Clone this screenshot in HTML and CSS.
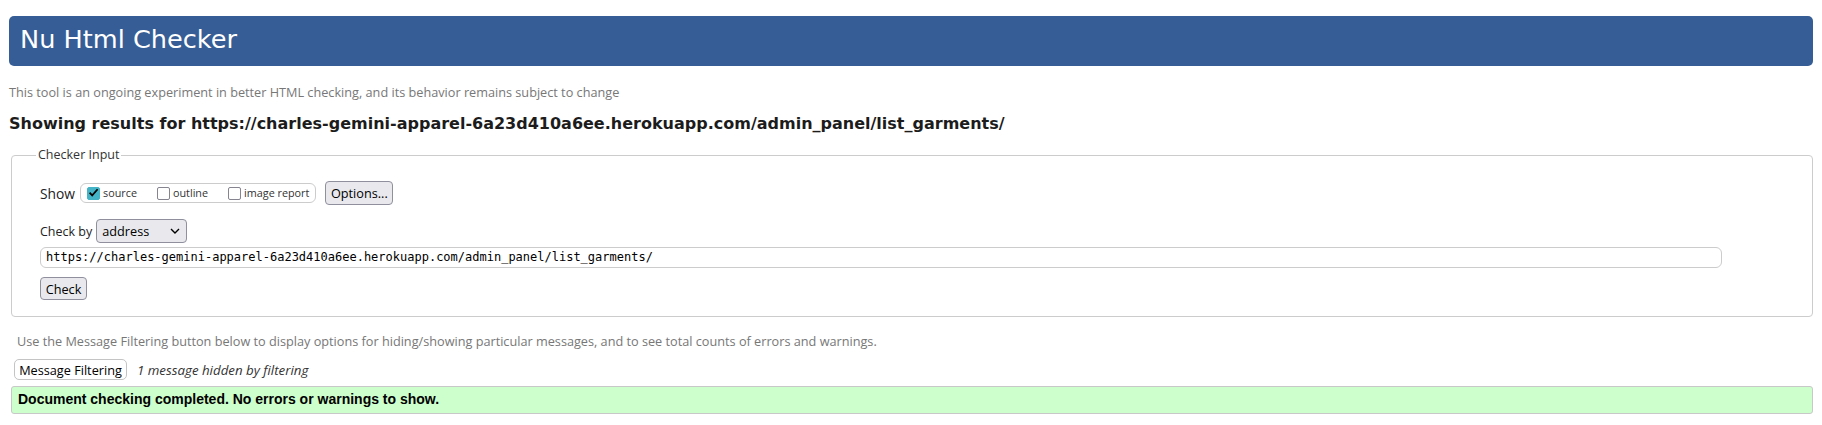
FILE: index.html
```html
<!DOCTYPE html>
<html lang="en">
<head>
<meta charset="utf-8">
<title>Nu Html Checker</title>
<link rel="stylesheet" href="styles.css">
</head>
<body>
<h1 class="title">Nu Html Checker</h1>
<p class="intro">This tool is an ongoing experiment in better HTML checking, and its behavior remains subject to change</p>
<h2 class="results">Showing results for https://charles-gemini-apparel-6a23d410a6ee.herokuapp.com/admin_panel/list_garments/</h2>

<form class="checker">
  <fieldset class="checker-input">
    <legend class="legend">Checker Input</legend>
    <div class="row show-row">
      <span class="row-label show-label">Show</span>
      <span class="show-group">
        <label class="opt"><span class="cb checked"><svg viewBox="0 0 13 13" width="13" height="13"><path d="M2.6 6.6 L5.2 9.4 L10.6 3.2" fill="none" stroke="#000" stroke-width="1.7"/></svg></span><span class="opt-text">source</span></label>
        <label class="opt"><span class="cb"></span><span class="opt-text">outline</span></label>
        <label class="opt"><span class="cb"></span><span class="opt-text">image report</span></label>
      </span>
      <button type="button" class="btn options">Options...</button>
    </div>
    <div class="row by-row">
      <span class="row-label">Check by</span>
      <span class="select"><span class="select-text">address</span><svg class="chev" viewBox="0 0 10 6" width="10" height="6"><path d="M1 1 L5 5 L9 1" fill="none" stroke="#000" stroke-width="1.4"/></svg></span>
    </div>
    <div class="url">https://charles-gemini-apparel-6a23d410a6ee.herokuapp.com/admin_panel/list_garments/</div>
    <button type="button" class="btn check">Check</button>
  </fieldset>
</form>

<p class="filter-note">Use the Message Filtering button below to display options for hiding/showing particular messages, and to see total counts of errors and warnings.</p>
<div class="filter-row">
  <button type="button" class="btn filter-btn">Message Filtering</button>
  <span class="hidden-note">1 message hidden by filtering</span>
</div>
<div class="success">Document checking completed. No errors or warnings to show.</div>
</body>
</html>
```
FILE: styles.css
```css
html, body {
  background: #ffffff;
}
body {
  margin: 0;
  padding: 16px 9px 0 9px;
  font-family: "Open Sans", "Noto Sans", sans-serif;
  font-size: 12.7px;
  color: #222;
}
.title {
  margin: 0;
  height: 50px;
  box-sizing: border-box;
  padding: 0 0 4px 11px;
  background: #365d95;
  border-radius: 5px;
  color: #ffffff;
  font-family: "DejaVu Sans", sans-serif;
  font-weight: 400;
  font-size: 25.6px;
  line-height: 46px;
}
.intro {
  margin: 17px 0 0 0;
  line-height: 18px;
  font-size: 12.7px;
  color: #777777;
}
.results {
  margin: 13px 0 0 0;
  font-family: "DejaVu Sans", sans-serif;
  font-weight: bold;
  font-size: 16px;
  line-height: 20px;
  color: #1c1c1c;
}
.checker {
  margin: 0;
}
.checker-input {
  margin: 12px 0 0 2px;
  padding: 17px 28px 16px 28px;
  border: 1px solid #cccccc;
  border-radius: 4px;
}
.legend {
  margin-left: -4px;
  padding: 0 2px;
  line-height: 18px;
  font-size: 12.5px;
  color: #333333;
}
.row {
  display: flex;
  align-items: center;
  height: 24px;
}
.row-label {
  font-size: 12.5px;
  color: #222;
}
.show-label {
  font-size: 13.8px;
}
.show-group {
  display: inline-flex;
  align-items: center;
  height: 20px;
  box-sizing: border-box;
  margin-left: 5px;
  padding: 0 6px 0 6px;
  border: 1px solid #cccccc;
  border-radius: 6px;
}
.opt {
  display: inline-flex;
  align-items: center;
  gap: 3px;
  margin-right: 20px;
}
.opt:last-child {
  margin-right: 0;
}
.cb {
  display: inline-block;
  width: 13px;
  height: 13px;
  box-sizing: border-box;
  border: 1.5px solid #85848f;
  border-radius: 2px;
  background: #fff;
}
.cb svg {
  display: block;
  margin: -1.5px;
}
.cb.checked {
  border-color: #44b3c6;
  background: #44b3c6;
}
.opt-text {
  font-size: 10.8px;
  color: #333;
  line-height: 14px;
}
.btn {
  font-family: "Open Sans", sans-serif;
  font-size: 12.7px;
  color: #000;
  background: #e9e9ed;
  border: 1px solid #8f8f9d;
  border-radius: 4px;
  padding: 0 5px;
  margin: 0;
}
.options {
  height: 24px;
  margin-left: 9px;
  width: 68px;
  padding: 0;
}
.by-row {
  margin-top: 14px;
}
.select {
  display: inline-flex;
  align-items: center;
  justify-content: space-between;
  width: 91px;
  height: 24px;
  box-sizing: border-box;
  margin-left: 4px;
  padding: 0 6px 0 5px;
  background: #e9e9ed;
  border: 1px solid #8f8f9d;
  border-radius: 4px;
  font-size: 12.7px;
  color: #000;
}
.url {
  margin-top: 4px;
  width: 1682px;
  height: 21px;
  box-sizing: border-box;
  padding-left: 5px;
  border: 1px solid #cccccc;
  border-radius: 6px;
  font-family: "DejaVu Sans Mono", monospace;
  font-size: 12px;
  line-height: 19px;
  color: #000;
}
.check {
  display: block;
  margin-top: 9px;
  height: 23px;
  width: 47px;
  padding: 0;
}
.filter-note {
  margin: 15px 0 0 8px;
  line-height: 18px;
  font-size: 12.7px;
  color: #777777;
}
.filter-row {
  display: flex;
  align-items: center;
  margin-top: 9px;
  margin-left: 5px;
  height: 21px;
}
.filter-btn {
  height: 21px;
  width: 113px;
  padding: 0;
  background: #ffffff;
  border: 1px solid #c4c4c4;
  border-radius: 5px;
}
.hidden-note {
  margin-left: 10px;
  font-style: italic;
  font-size: 13.3px;
  color: #333333;
}
.success {
  margin: 6px 0 0 2px;
  height: 28px;
  box-sizing: border-box;
  padding: 0 0 1px 6px;
  background: #ccffcc;
  border: 1px solid #c8c8c8;
  border-radius: 3px;
  font-family: "Liberation Sans", Arial, sans-serif;
  font-weight: bold;
  font-size: 14px;
  line-height: 25px;
  color: #000;
}
```
